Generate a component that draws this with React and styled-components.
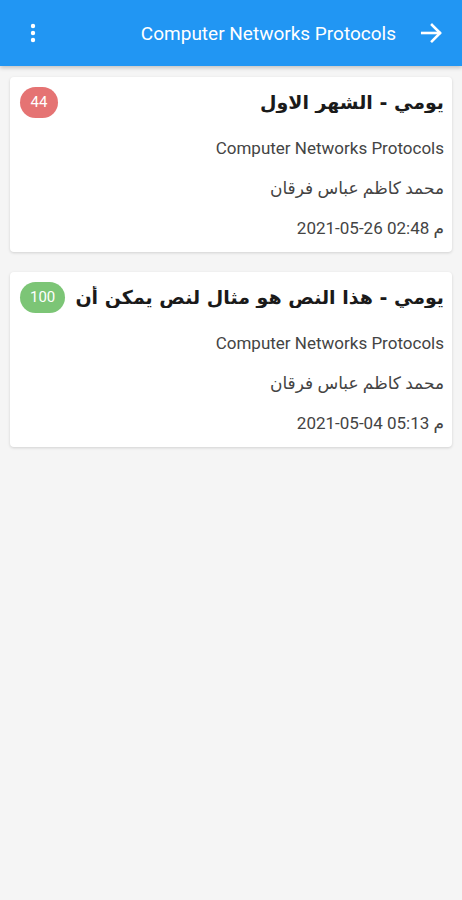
import React from "react";
import styled, { createGlobalStyle } from "styled-components";

const GlobalStyle = createGlobalStyle`
  body {
    margin: 0;
    background: #f5f5f5;
    font-family: Roboto, "DejaVu Sans", sans-serif;
  }
`;

const items = [
  {
    title: "يومي - الشهر الاول",
    course: "Computer Networks Protocols",
    teacher: "محمد كاظم عباس فرقان",
    date: "2021-05-26 02:48 م",
    score: "44",
    color: "#e57373",
  },
  {
    title: "يومي - هذا النص هو مثال لنص يمكن أن",
    course: "Computer Networks Protocols",
    teacher: "محمد كاظم عباس فرقان",
    date: "2021-05-04 05:13 م",
    score: "100",
    color: "#7cc576",
  },
];

const App = () => {
  return (
    <Page>
      <GlobalStyle />
      <Toolbar>
        <MenuButton>
          <svg width="24" height="24" viewBox="0 0 24 24" fill="#fff">
            <circle cx="12" cy="5" r="2.2" />
            <circle cx="12" cy="12" r="2.2" />
            <circle cx="12" cy="19" r="2.2" />
          </svg>
        </MenuButton>
        <ToolbarTitle>Computer Networks Protocols</ToolbarTitle>
        <BackButton>
          <svg width="26" height="26" viewBox="0 0 24 24" fill="none" stroke="#fff" strokeWidth="2.4" strokeLinecap="square">
            <path d="M3 12h16" />
            <path d="M12 4.5l7.5 7.5-7.5 7.5" />
          </svg>
        </BackButton>
      </Toolbar>
      <List>
        {items.map((item, i) => (
          <Card key={i}>
            <TitleRow>
              <Title>{item.title}</Title>
              <Badge $color={item.color}>{item.score}</Badge>
            </TitleRow>
            <Line>{item.course}</Line>
            <Line>{item.teacher}</Line>
            <Line>
              <bdi dir="ltr">{item.date}</bdi>
            </Line>
          </Card>
        ))}
      </List>
    </Page>
  );
};
export default App;

const Page = styled.div`
  width: 462px;
  min-height: 900px;
  background: #f5f5f5;
`;

const Toolbar = styled.div`
  height: 66px;
  background: #2196f3;
  display: flex;
  align-items: center;
  padding: 0 8px 0 21px;
  box-sizing: border-box;
  box-shadow: 0 2px 4px rgba(0, 0, 0, 0.2);
`;

const MenuButton = styled.div`
  display: flex;
  align-items: center;
  justify-content: center;
  width: 24px;
  height: 24px;
`;

const BackButton = styled.div`
  display: flex;
  align-items: center;
  justify-content: center;
  width: 44px;
  height: 24px;
  margin-left: 14px;
`;

const ToolbarTitle = styled.div`
  flex: 1;
  text-align: right;
  color: #fff;
  font-family: Roboto, sans-serif;
  font-size: 19px;
`;

const List = styled.div`
  display: flex;
  flex-direction: column;
  gap: 20px;
  padding: 11px 10px;
`;

const Card = styled.div`
  direction: rtl;
  background: #fff;
  border-radius: 4px;
  box-shadow: 0 1px 3px rgba(0, 0, 0, 0.15);
  padding: 9px 8px 4px 10px;
  height: 175px;
  box-sizing: border-box;
  display: flex;
  flex-direction: column;
`;

const TitleRow = styled.div`
  display: flex;
  align-items: center;
  justify-content: space-between;
  gap: 8px;
  height: 32px;
  flex-shrink: 0;
  margin-bottom: 10px;
`;

const Title = styled.div`
  font-family: "DejaVu Sans", Roboto, sans-serif;
  font-size: 19px;
  font-weight: bold;
  color: #1a1a1a;
  white-space: nowrap;
  overflow: hidden;
`;

const Badge = styled.div`
  flex-shrink: 0;
  min-width: 38px;
  height: 31px;
  padding: 0 10px;
  box-sizing: border-box;
  border-radius: 16px;
  background: ${(p) => p.$color};
  color: #fff;
  font-family: Roboto, sans-serif;
  font-size: 15px;
  display: flex;
  align-items: center;
  justify-content: center;
`;

const Line = styled.div`
  height: 40px;
  flex-shrink: 0;
  display: flex;
  align-items: center;
  font-family: Roboto, "DejaVu Sans", sans-serif;
  font-size: 17px;
  color: #444;
`;
